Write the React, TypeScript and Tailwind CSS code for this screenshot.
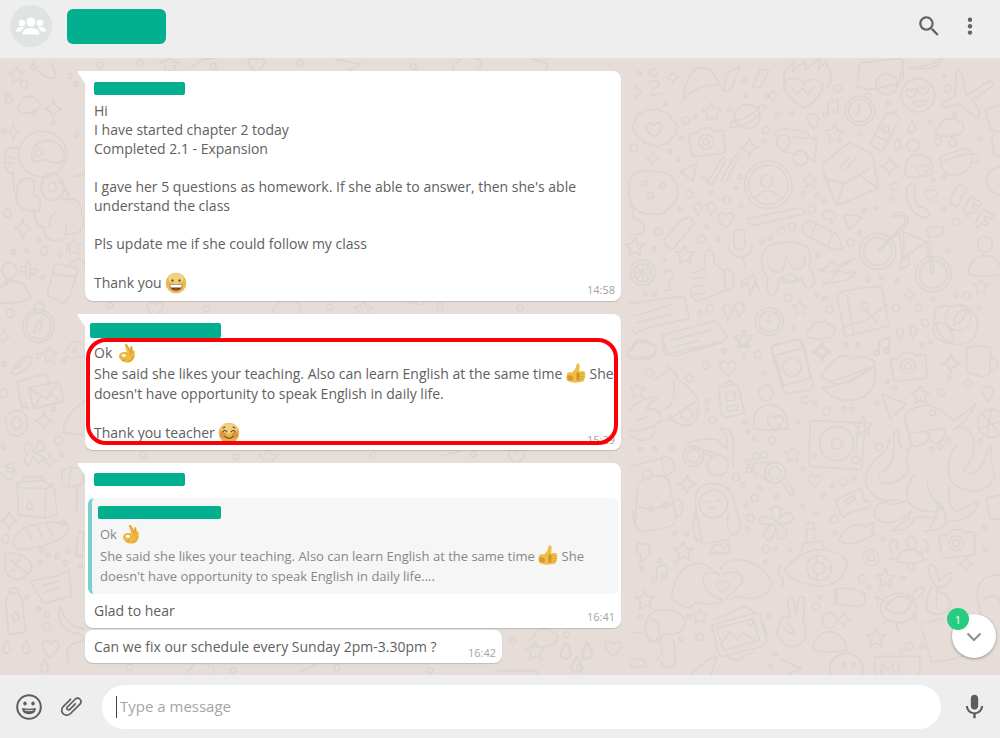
import { ReactNode } from "react";

type Point = [number, number];

/* ---------- Wallpaper ---------- */

const STAR =
  "M0-28l8 19 21 1-16 14 6 21L1 16l-18 11 4-21-17-14 21-2z";
const SPARKLE = "M0-28q4 23 28 28q-24 5-28 28q-4-23-28-28q24-5 28-28z";
const HEART = "M0 24C-14 14-27 4-24-9C-20-22-4-21 0-10C5-22 22-21 24-8C26 4 12 14 0 24z";
const CAMERA =
  "M-48-24l22-3 5-12 34-3 6 10 27-2q6 0 6 7l3 54q0 7-6 8l-86 9q-7 0-8-7l-9-53q-1-6 6-8zM20 0a22 22 0 1 1-44 0a22 22 0 1 1 44 0M8 0a10 10 0 1 1-20 0a10 10 0 1 1 20 0";
const PERSON =
  "M22-45a22 24 0 1 1-44 0a22 24 0 1 1 44 0M-50 45q2-50 50-57q46 4 52 57q-50 10-102 0z";
const NOTE = "M-14 18V-18L16-28V10M-14 18a7 7 0 1 1-14 0a7 7 0 1 1 14 0M16 10a7 7 0 1 1-14 0a7 7 0 1 1 14 0";
const CLOUD = "M-38 20q-10-22 12-26q4-26 28-20q14-8 22 8q22 0 18 20q-4 22-30 20q-20 8-50-2z";
const DROP = "M0-18q18 26 4 33q-14 4-15-9q2-10 11-24z";

function Shapes({ d, at, scale = 1 }: { d: string; at: Point[]; scale?: number }) {
  return (
    <>
      {at.map(([x, y]) => (
        <path key={`${x}-${y}`} d={d} transform={`translate(${x} ${y}) scale(${scale})`} />
      ))}
    </>
  );
}

function Rings({ at, r }: { at: Point[]; r: number }) {
  return (
    <>
      {at.map(([x, y]) => (
        <circle key={`${x}-${y}`} cx={x} cy={y} r={r} />
      ))}
    </>
  );
}

function UpperDoodles() {
  return (
    <g transform="translate(630 2) scale(.3333)">
      <Rings r={11} at={[[70,38],[168,182],[408,210],[12,264],[178,402],[290,420],[85,515],[215,537],[544,448],[454,512],[485,500],[662,547],[624,86],[794,378],[978,486],[598,748],[798,744],[866,743],[924,245],[952,86],[474,714],[885,789],[240,746],[1010,707]]} />
      <Rings r={6} at={[[27,40],[107,130],[197,170],[298,150],[343,62],[348,106],[402,243],[442,165],[484,162],[412,108],[155,236],[119,275],[145,297],[243,396],[332,437],[318,384],[328,351],[151,449],[231,500],[263,537],[72,566],[101,600],[397,545],[422,535],[520,401],[560,405],[584,426],[703,452],[737,444],[688,517],[565,585],[713,659],[802,663],[755,652],[210,760],[561,705],[584,716],[776,131],[690,221],[900,188],[975,162],[942,47],[1051,236],[910,359],[942,352],[785,415],[941,447],[955,572],[976,706],[908,717],[1047,743],[647,853],[685,854],[876,855],[902,846],[73,703],[46,701],[490,805],[282,872],[342,885]]} />
      <Shapes d={STAR} at={[[245,155],[614,220],[165,585],[15,560],[341,836]]} />
      <Shapes d={STAR} scale={0.8} at={[[540,361],[510,743],[1053,680]]} />
      <Shapes d={SPARKLE} at={[[358,262],[779,319],[575,873]]} />
      <Shapes d={SPARKLE} scale={0.7} at={[[128,52],[429,108],[68,295],[839,704]]} />
      <Shapes d={HEART} at={[[288,478],[72,207]]} />
      <Shapes d={HEART} scale={0.8} at={[[902,404],[877,330]]} />
      <Shapes d={CAMERA} at={[[230,245]]} />
      <Shapes d={PERSON} at={[[1065,598]]} />
      <Shapes d={NOTE} at={[[608,145],[762,862]]} />
      <Shapes d={CLOUD} at={[[572,812],[958,204],[35,868]]} />
      <Shapes d={DROP} at={[[846,202],[803,252],[968,245]]} />
      <path d="M140 205q4 24-16 28q-2 22-24 18q-18 18-34 0q-22 8-28-12q-24-4-20-24q-20-16-2-30q-4-24 20-24q10-20 30-8q18-12 30 4q26-2 26 20q22 10 18 28zM5 345q30-20 60-10q50-6 70 30q20 40-8 68q-20 34-62 30q-50-2-62-38q-14-40 2-80" />
      <circle cx="62" cy="406" r="9" /><circle cx="98" cy="378" r="8" /><circle cx="45" cy="370" r="8" />
      <path d="M160 120q8-88 52-98q40-2 54 54q-60-8-106 44zM190 28q50-20 84 52M280 92l10-50 40-24-30 76zM368 78l22-50 28 5-24 44q-20 14-26 1z" />
      <ellipse cx="352" cy="170" rx="38" ry="36" /><path d="M318 178q-22 15-18 25q60 0 109-63q-8-10-25 1M317 182q40-5 70-39" />
      <path d="M524 145C450 100 445 55 490 55Q518 52 522 74Q540 48 570 65C592 84 560 122 524 145zM465 75Q450 35 492 8L488 36 525 2V30L570-4 565 28 585 8Q620 45 590 88M487 80l12 25 18-22 16 23 20-28" />
      <path d="M695 8l112-12q14 2 12 15l-12 60-90 18-36-10 8-64zM820 2v60" /><circle cx="770" cy="72" r="32" /><circle cx="690" cy="152" r="44" /><circle cx="690" cy="152" r="34" /><path d="M685 130l5 25-14 12M700 110q8-16 22-8" />
      <circle cx="864" cy="106" r="50" /><path d="M842 112q-18-10-14-21 8-8 15 2 8-12 16 1-2 12-17 18zM878 104q-18-10-14-19 8-8 14 2 10-12 18 0-2 11-18 17zM848 124q18 2 40-4 2 16-16 18-20 2-24-14zM838 22q70 0 100-32-14 50-100 32z" />
      <path d="M975 108l4-76q10-14 18 18l12 58 66-44q15-4 15 12l-62 44 20 36q2 20-14 14l-44-38-46 10q-22 0 3-20z" />
      <path d="M552 208q-25-28-20-41 18-12 32 4 6 15-12 37zM432 230q2-30 60-20l40 6q12 14-6 20l-40-5M545 235q16-5 14 20l-6 50-28-22M448 270l60 15" /><circle cx="460" cy="246" r="21" /><circle cx="512" cy="294" r="22" />
      <path d="M722 248l44-84q28-16 42 14l-44 84q-10 14-22 6-16-8-20-20zM742 200l46 24M734 226l46 20M790 160l14-10" /><circle cx="767" cy="208" r="10" />
      <path d="M580 310l80-64 66 36 20 102-126 54-36-92q-10-24-4-36zM582 355l62 16 72-44M640 372l-18 62M690 345l54 40M628 325l30-34M645 330l32-38" />
      <circle cx="849" cy="257" r="18" /><path d="M825 338q-2-54 40-54 48 2 42 58-8 8-76 9zM932 290q46-20 86-26l8 26q-2 54-60 56-34-4-34-56zM940 304q45-20 82-24M1028 282q24 0 16 18-8 12-20 8" />
      <circle cx="415" cy="374" r="71" /><circle cx="415" cy="374" r="59" /><circle cx="410" cy="363" r="18" /><path d="M372 416q42-50 85 2M150 333l50-22-12 52zM215 352q10-12 22 10l40-70q10-2 10 8l-40 76zM275 358l42-74q12-2 6 12l-34 68q-8 10-14-6z" />
      <path d="M355 475l154-31q16 2 15 18l-152 34q-20 0-17-21zM102 538l50-56q30-20 40 8l-62 76q-26 2-28-28zM525 488q-16 18 2 38l84 44 28-5-18-42-72-38q-14-4-24 3zM560 485l-16 46M610 515l-18 45" />
      <path d="M832 380q-10 54 30 84 16 16 38 2 4-10-24-26-16 10-22-40 6-24-8-30zM640 466q40-4 56 8l-38 34zM580 460q15-15 30-4 15 20-8 34 6-14-10-12-20-5-12-18zM190 440q6-16 20-8 16 12-8 37 2-12-6-14zM230 436q12-14 22-4 14 14-10 35 2-12-6-14z" />
      <path d="M960 415l25-40q20-2 25 16-6 14-16 12 2 24-14 36-24-2-20-24zM1000 450l22-40 34 18-6 12-18-8-4 12 16 6-6 10-18-6-10 18zM1036 490l22-42 34 18-8 10-18-8-4 12 14 6-6 10-18-6-8 14z" />
      <circle cx="743" cy="574" r="54" /><circle cx="743" cy="574" r="42" /><circle cx="910" cy="643" r="53" /><circle cx="910" cy="643" r="41" />
      <path d="M745 570l78-80q12-32-36-20 0-20 30-10 30 16 10 36l-80 78M820 515l72 30-70 46zM808 520l10 86M890 545l14 94 8-2-14-94M895 520q-12-18 8-18h38q4 32-46 28zM812 600l22-10 4 24-28 14z" />
      <rect x="312" y="508" width="32" height="62" rx="16" /><path d="M296 560q8 32 35 32 34-2 36-40M338 592l8 34M333 668l37-24 18 48-14-26-14 46-6-46-20 16z" />
      <path d="M185 640l42-14q-10-50 8-58 20 8 16 40l32 26 2 58-80 32q-24-4-24-36M188 655l42-2M185 680l40-4M190 702l36-2M280 630q28-8 30 20 6 40-22 42" />
      <path d="M396 595q-2-34 40-44 50-14 92 8 24 26 8 58l16 34q6 28-18 34-14-6-20-30-36 30-66-2-2 40-20 56-24-2-14-56-18-20-18-58zM412 600q8 40 36 36 18-6 16-42M470 590q10 40 34 38 22-4 20-36M456 652q24-20 46 2-20 20-46-2z" />
      <path d="M564 630q25-2 30-18 14-12 25 6l54-22-56 35q-20 12-53-1zM578 668q28 0 34-24 16-20 36-4l34-6-30 26-70 14M620 700q70-20 134-20l24 118-134 32zM650 705l22 112M640 800l62-16 70-50M700 740l42 50" /><circle cx="704" cy="740" r="12" />
      <circle cx="38" cy="638" r="38" /><circle cx="38" cy="638" r="27" /><path d="M38 612v52M12 638h52M20 620l36 36M56 620l-36 36M100 640q16-18 31 0-2 18-14 22v26M105 692l25-5" />
      <path d="M0 730l152-20q12 0 14 12l12 54-120 26-44 18-14-20M14 768l110-34M22 788l106-26M95 826l154-42q18 0 22 18l20 26-16 20-144 40q-12 0-20-10zM122 842l120-32M130 862l76-20" />
      <circle cx="418" cy="785" r="42" /><circle cx="418" cy="785" r="31" /><path d="M418 765l4 25-14-10M918 745q30-12 48-4 50-24 76 40 4 66-50 72-80 0-82-44zM915 790q40-14 58 52-30 18-58-52zM422 862l80-25q14 0 16 12l14 50M432 900l-8-38M280 740q12-12 22 0 12 18-10 40 2-12-8-18zM314 732q20-14 28 8 2 14-18 32 4-18-10-24zM798 808q14-10 22 6-2 22-14 24zM838 800q14-8 22 6-2 18-14 28z" />
      <circle cx="984" cy="774" r="38" /><path d="M972 775q12-28 40-24-8 30-40 46zM1110 135l-44 12 16 62 28 8M1100 210l-14 20 6 56 18 4M1110 320q-40 10-40 40t40 46M10 75l26 18-22 20M50 70q40-18 38 5-30 20-28 34l34-10M0 430q10 30 12 45 40 10 28 45l-40 4" />
    </g>
  );
}

function LowerDoodles() {
  return (
    <g transform="translate(630 282) scale(.3333)">
      <Rings r={11} at={[[58,98],[178,114],[227,76],[385,43],[248,239],[525,180],[590,214],[427,301],[318,411],[374,474],[361,534],[408,627],[697,716],[747,320],[933,158],[1014,130],[843,681],[838,919],[639,425],[612,538],[558,800],[208,891]]} />
      <Rings r={6} at={[[345,246],[355,275],[375,298],[231,183],[232,212],[348,15],[282,32],[402,98],[503,246],[553,188],[641,206],[667,208],[519,386],[606,436],[673,415],[773,124],[795,144],[740,188],[957,113],[1064,562],[1064,627],[405,667],[437,626],[480,628],[614,578],[571,772],[717,740],[760,598],[338,434],[389,446],[440,470],[517,498],[558,520],[135,580],[138,666],[170,581],[127,324],[74,327],[31,328],[36,687],[176,830],[31,830],[153,897],[416,830],[435,941],[423,979],[876,919],[812,933],[820,715],[88,662],[352,567],[350,497],[580,465],[647,13],[1052,302],[684,14]]} />
      <Shapes d={STAR} at={[[160,634],[45,779],[738,893],[766,714],[871,164],[700,258]]} />
      <Shapes d={STAR} scale={0.8} at={[[488,343],[22,152],[209,829],[341,4]]} />
      <Shapes d={SPARKLE} at={[[171,433],[576,37],[963,70]]} />
      <Shapes d={SPARKLE} scale={0.8} at={[[640,838],[1008,672]]} />
      <Shapes d={HEART} at={[[294,83],[435,246]]} />
      <Shapes d={HEART} scale={0.8} at={[[556,420],[279,738]]} />
      <Shapes d={CAMERA} at={[[836,79],[981,610]]} />
      <Shapes d={PERSON} at={[[598,886]]} />
      <Shapes d={NOTE} at={[[94,700],[760,20]]} />
      <Shapes d={CLOUD} at={[[35,34]]} />
      <path d="M425 35q-2-20 15-23l54-12q18-2 22 14l34 116q2 16-14 20l-58 10q-16 0-20-16zM434 46l88-22 20 92-82 20z" /><circle cx="486" cy="82" r="28" />
      <path d="M574 108q40-62 70-61 12 4 18 12 26-18 72 4 8 16-36 40-50 40-100 24zM574 140q50 10 160-60 14 60-36 92-70 30-124-32zM600 122q40-4 120-40" />
      <path d="M0 208q40-40 84-36-24 16-36 34 42 0 46 24-6 36-94 44M76 118l38-28q-4-18 10 0 24 14 18 30 36 12 60 60l-80 56-34 10M130 122q12 60-22 86M20 240l34-10M205 190q2 70-44 66-40-8-40-30M0 285q20 20 50 15 25-10 24-40" /><circle cx="170" cy="222" r="18" />
      <path d="M265 145l46-12q14 4 16 14l16 72-55 14q-12-4-14-16zM270 138l30-16 12 10" /><rect x="288" y="155" width="28" height="28" rx="10" /><path d="M290 200l34-6 2 14-34 6z" />
      <ellipse cx="408" cy="159" rx="21" ry="24" /><path d="M372 267q-8-70 48-73 54 4 54 72-42 8-102 1z" />
      <path d="M540 250q0-9 10-8l144 6q12 0 10 14l-8 118q0 10-10 9l-142-10q-8-2-7-12zM678 340l4-60" /><circle cx="620" cy="311" r="51" /><circle cx="620" cy="311" r="17" /><circle cx="552" cy="348" r="7" /><circle cx="677" cy="360" r="12" />
      <path d="M755 162l76 30-50 44zM1010 25q46-14 72 0l-2 78-20 8-50-14zM1082 55q20-8 20 22-4 20-22 14M1075 185q-24-24-18-41 16-12 32 2 8 14-14 39z" />
      <path d="M838 280q-30-50 4-70 50-30 95 4 24 18 34 30l68-54-30 50-38 30q50-30 62 50-4 40-32 70 30 30 64-30 24-80 16 0 14 40 14 50-30 60-96 36-44-14-44-56 0-40 24-76M834 340l8-20-8-56q-4-20-12-30M790 278q18-16 16 10 0 44 30 40-10 50 0 62-30 50-84 36-20-20 16-38 30-24 22-110M780 292q-4 40-40 62-44 48-30 84 20 40 56 44l30-2 34 4-40 10q-60-24-56 38 34 30 88 0 24-20 20-20 0 30-32 40-20 20-26 20 60 0 70-40l64 0M855 402q-36 40-18 86 40 40 100 20-50-50-44-84M948 545q-4-50-22-60-16 90-44 90 60-6 66-30M958 440q-8 60 20 76l66-34q-4 60-96 64" />
      <path d="M840 280l104-16q2 40-24 46-18-2-22-20-14 30-44 30-14-10-14-40zM886 282l12-4" /><circle cx="908" cy="218" r="8" /><circle cx="905" cy="330" r="7" /><circle cx="955" cy="300" r="7" /><circle cx="930" cy="320" r="7" /><circle cx="1085" cy="250" r="42" /><path d="M1055 220l55 60M1050 265l60-20M1085 208l-15 80" />
      <circle cx="190" cy="348" r="31" /><circle cx="190" cy="348" r="20" /><circle cx="264" cy="376" r="31" /><path d="M165 312q60-20 96-14l30 30v-30q-4-26-24-30 8-8 26 0l16 20v90M220 340l30 10M180 320l90 24" />
      <circle cx="435" cy="398" r="31" /><circle cx="435" cy="398" r="18" /><path d="M455 425l26 42 12-6-22-42M376 368h40M376 395q30 30 50 30M376 368q-14 14 0 40" /><circle cx="376" cy="348" r="10" /><circle cx="402" cy="345" r="10" /><circle cx="355" cy="366" r="8" /><circle cx="357" cy="390" r="8" />
      <path d="M0 380l110-30q20 6 24 28 0 20-20 26l-20 6M92 355l12 44M22 440q10-30 50-32 36-6 46 20l20 100q0 26-24 34l-76 14q-20-8-22-30zM25 500l40 8 70-20M10 510q-4 50 16 54M140 478q20 2 18 20-2 30-22 32" /><circle cx="62" cy="506" r="8" /><circle cx="106" cy="495" r="8" /><circle cx="52" cy="404" r="14" />
      <circle cx="250" cy="492" r="42" /><path d="M196 490q-2-58 52-60 50 0 64 50 16 50 18 80-2 26-26 25-4 12-16 15l-70 12q-20-90-22-122zM196 510q-18 90 20 98M294 520q-10 70 28 62M228 488q8-8 14 0M256 484q8-8 14 0M240 500q10 14 18-2M240 640l10-24 24-4 4 18 18-22 6 32z" />
      <path d="M438 545q-30-44 0-46 28 0 4 46 36-46 46-16 10 24-46 22 40 20 24 38-22 26-28-32-10 60-34 36-12-24 30-42-46 10-46-12 8-24 50 6z" />
      <path d="M615 480l78-35 12 40q20-6 16 10-4 16-18 10l-46 14-16 14-10-14zM645 482l28-16 2 14-28 14zM626 600q30-60 80-40l26-14-6 34 12 2-26 10q-50 34-86 8z" /><path d="M462 690q60-70 120-60 74 10 68 50-20 60-90 58-80-10-98-48zM515 635l4-24 55-8 10 26M530 606l-2-56 24-2 2 50M530 570l24-4M455 675q-18 20-6 34 20 0 6 34" /><circle cx="567" cy="684" r="37" /><circle cx="567" cy="684" r="18" />
      <path d="M560 650v20M560 700v20M532 684h20M582 684h20" /><circle cx="723" cy="653" r="24" /><circle cx="723" cy="653" r="11" />
      <ellipse cx="844" cy="609" rx="15" ry="19" /><path d="M800 664q6-36 42-35 34 2 40 34-40 12-82 1M790 640q-22-20-2-40 18 0 14 28M880 600q24 8 10 32l-14 6M780 655l20 2M898 658l-20 2" />
      <path d="M125 760q20-78 64-88 30-8 50 12l30 20q-50-18-50 20 8 40 60 56-20 20-80 6l-20 18q-52-10-54-44zM270 690q20-40 70-28 64 10 86 70-16 40-60 45l-50-8q-20 20-28 4 40-30 50-50-2-40-60-20" />
      <path d="M245 855l132-36q14 2 16 14l16 70q0 12-12 16l-116 30q-14 0-16-12zM260 865l110-30 18 66-106 30zM270 915l30-40 20 20 20-16 40 24M250 840l96-42 28 18M400 850l14 40M290 950l30 12 50-26" /><circle cx="360" cy="848" r="9" />
      <path d="M450 860q-4-40 30-26l-8-56q8-14 18 2l8 44 8-50q16-10 18 8l-4 70q20 40-16 66-40 8-52-20-22-16-2-38zM470 850q24 10 20 30-20 0-30-20M615 748q60-10 90 14l-2 30-12 8-76-8zM620 755v30M690 765l14-6" />
      <ellipse cx="806" cy="804" rx="54" ry="44" /><path d="M765 805q40-60 80-20-20 60-80 20zM846 774q10-40 36-30 10 10-36 40M760 780l-22-10 8 26M780 840l-20 10M800 848q-2 20 10 28M858 830q8 24-14 6M780 790l-20-10M830 775l10-12M845 820l14 10" />
      <path d="M895 675q30-4 30 50 40-40 42-20-2 28-42 40-30-20-30-70zM905 740q-20 40-14 70 40 30 72-10-4-40-40-46M920 740v60M1040 760q10-60 70-54M1040 760l16 90M1058 780q50-30 52 10M880 850l60-14M874 860l30 105q10 6 100-18" />
      <path d="M46 860q4-50 50-50 60-4 70 40-10 40-50 30-14 0-22 10-10 30-30 10-20-10-18-40zM60 838q30 0 28 40-10 40-30 24M0 876q20 6 40 0M88 900l10 40-18 20M130 900l8 60-10 20-30 2-4-20M5 980q-14-30 10-20 30-12 34 20zM180 1004l60-50 22-2-20 52M455 960l60 26-44 18" /><circle cx="649" cy="990" r="50" /><path d="M735 1004v-55h134v55M755 1004v-34l18 20 18-20v34M806 970v34M640 980q-14-10 4-12 10 0-4 12zM668 980q-10-12 4-12 10 0-4 12z" />
      <path d="M22 610l40 4-8 20 10 2-36 36 6-28-16-4zM95 5l8 40 170-40M1070 475l40-10M1070 475l10 60 30 4" />
    </g>
  );
}

function LeftDoodles() {
  return (
    <g transform="translate(0 2) scale(.3333 .3922)">
      <Rings r={11} at={[[25,98],[72,62],[22,390],[133,486],[30,646],[10,850],[176,970],[195,345],[16,1220],[140,1444],[32,1040]]} />
      <Rings r={6} at={[[102,133],[98,18],[160,160],[10,182],[40,490],[80,486],[180,495],[205,480],[115,460],[128,555],[20,565],[115,755],[190,768],[12,775],[72,880],[160,890],[185,1005],[10,985],[125,1250],[205,1250],[120,1282],[145,1262],[170,1265],[195,1282],[115,1400],[140,1415],[190,1180],[225,740],[80,1370],[240,1290],[20,90],[210,40],[228,62],[230,190]]} />
      <Shapes d={STAR} at={[[50,38],[222,476],[148,752]]} scale={0.8} />
      <Shapes d={SPARKLE} at={[[160,125],[69,430],[131,920],[28,1175]]} scale={0.9} />
      <Shapes d={SPARKLE} at={[[40,184],[10,705],[150,1022]]} scale={0.7} />
      <Shapes d={HEART} at={[[152,1500]]} />
      <Shapes d={CLOUD} at={[[86,115],[228,740]]} scale={0.8} />
      <Shapes d={DROP} at={[[20,1497],[78,1497],[134,1545]]} />
      <ellipse cx="128" cy="240" rx="72" ry="58" /><path d="M95 240q8-34 50-34 44 0 50 48-20 16-60 0-40 14-40-14zM105 238q10-20 24-10-4 20-20 18zM55 225q-44-10-42 35 4 30 30 32M20 245l24 6M16 262l24 2M40 285q0 80 28 94 50 14 50 0 12-30-16-34V310q-8-14-30-6-28 4-20 64M100 380l8 30q10 18 24 16 0 32 30 34 34 0 36-18 50 8 52-30l-10-44q-14-20-34-10-8-40-30-50M150 426q-8-26 16-36M200 440l-4-24M215 300l40-10" />
      <circle cx="157" cy="324" r="34" /><circle cx="157" cy="324" r="12" />
      <ellipse cx="28" cy="537" rx="22" ry="20" /><path d="M0 580q30-30 70-8l25 32q-20 18-95 15M88 513q4 20 2 22 24-4 22 4-2 12-24 4 8 14-2 14-12 0-6-18-24 4-20-8 6-8 20 0-8-16 8-18zM166 518l68 14-20 60q-16 28-28 28l-40-18q-8-12 4-30zM160 545l70 8M200 530q40-40 56-6" />
      <ellipse cx="116" cy="678" rx="47" ry="42" /><ellipse cx="116" cy="678" rx="37" ry="33" /><circle cx="117" cy="632" r="15" /><path d="M128 662l-8 24-20 10 10-24zM32 796l36-38q20-8 30 4 2 12-34 34-22 10-32 0zM45 790l34-30M50 820l80-18q18 4 16 30M50 820l14 64 24 4M86 836l90-16q12 26 14 50l-90 20zM86 836l54 28 36-44M100 890l26-36M188 874l-40-26" />
      <circle cx="50" cy="926" r="33" strokeDasharray="14 6" /><circle cx="50" cy="926" r="15" />
      <path d="M255 870q-60 30-66 80l60 6M70 990q10-20 25-10l6 24 14-30q20-2 18 18l-26 10 26 12-18 14-16-18-10 24-18-8 10-20zM10 1035l36 10-8 20-14 6-20-18M50 1078l78-6 34 18 10 70-36 8-80-8zM50 1078l12 12 76 4 24-14M138 1094l-4 74M88 1125q20 24 0 20-16 0 0-20zM70 1078v-14l60-2v12" />
      <path d="M38 1230q12-36 60-44 60-14 105-2 10 26-40 44-60 20-100 20-22-4-25-18zM80 1192l16 30M110 1186l16 30M140 1182l16 30M14 1258q60-4 80 26 4 20-14 30-40 28-66-16 8-20 0-40zM30 1275l50 32M45 1284l16-12M50 1300l-16 2M90 1330l76-14 40-14 8 64-82 20-18-24zM130 1340l46-12M132 1358l44-12M16 1380l10-20h30l12 22 8 76-50 6zM30 1360v-14h24v14M46 1405q22 20 4 26-22-2-4-26zM180 1390q-12 60 40 70 30 0 32 20M180 1390q20 60 75 60M205 1540q-10-40 10-50l40-10" />
      <path d="M185 1060q0-20 30-22 34 4 34 10v30q-30 16-62 6zM215 1038l-10 46M230 1090v60M236 1200l15 6-4 60-20-4zM100 5q16 40 64 42 4-20-14-44" />
    </g>
  );
}

function GapDoodles() {
  return (
    <g transform="scale(.3333)">
      <Rings r={9} at={[[300,22],[420,15],[640,25],[900,16],[1240,26],[330,742],[620,752],[990,748],[1320,745],[1560,750],[430,1190],[710,1196],[1120,1192],[1420,1188],[390,1828],[700,1838],[1010,1830],[1290,1838],[1538,1748],[1700,1730],[1740,1830]]} />
      <Shapes d={STAR} at={[[1606,1778],[510,20],[1090,755],[805,1198]]} />
      <Shapes d={HEART} at={[[1840,1770],[770,18],[465,752],[1550,1194]]} />
      <Shapes d={DROP} scale={1.4} at={[[1698,1780],[1762,1780],[1730,1820]]} />
      <Shapes d={CLOUD} at={[[1630,1740],[1400,20],[860,750],[600,1840]]} />
      <path d="M560 34l48-30 40-4M1010 4l70 14-50 30M1490 1838h120l10 20M1600 4l44 14-10 24M1220 732l46 10 12-20M1320 1194l60-14M900 1840l50-20" />
    </g>
  );
}

function Wallpaper() {
  return (
    <svg
      aria-hidden="true"
      className="absolute inset-0 h-full w-full"
      fill="none"
      stroke="#ddd5cf"
      strokeWidth="5"
      strokeLinecap="round"
      strokeLinejoin="round"
    >
      <UpperDoodles />
      <LowerDoodles />
      <LeftDoodles />
      <GapDoodles />
    </svg>
  );
}

/* ---------- Emoji ---------- */

function Grin() {
  return (
    <svg role="img" aria-label="grinning face" viewBox="0 0 22 22" className="inline-block size-[22px] align-[-6px]">
      <circle cx="11" cy="11" r="10.3" fill="#e9b94a" />
      <ellipse cx="11" cy="6.5" rx="8" ry="5.2" fill="#f0d083" />
      <ellipse cx="7.5" cy="8.6" rx="1.2" ry="1.4" fill="#7b5a2c" />
      <ellipse cx="14.5" cy="8.6" rx="1.2" ry="1.4" fill="#7b5a2c" />
      <path d="M4.6 12.5h12.8q-.6 6.2-6.4 6.2t-6.4-6.2z" fill="#6a4532" />
      <path d="M5 12.8h12l-.8 2.8H5.8z" fill="#fff" />
      <path d="M8 17.5q3-1.5 6 0-3 1.8-6 0z" fill="#d2453b" />
    </svg>
  );
}

function Blush() {
  return (
    <svg role="img" aria-label="smiling face" viewBox="0 0 22 22" className="inline-block size-[22px] align-[-6px]">
      <circle cx="11" cy="11" r="10.3" fill="#e8b646" />
      <ellipse cx="11" cy="6.5" rx="8" ry="5.2" fill="#f0d083" />
      <circle cx="5" cy="13" r="3" fill="#dc9448" />
      <circle cx="17" cy="13" r="3" fill="#dc9448" />
      <path d="M4.8 9.8q2-2.8 4 0M13.2 9.8q2-2.8 4 0M7 14.5q4 3.8 8 0M5 6l2-1M15 5l2 1" fill="none" stroke="#735022" strokeWidth="1.2" strokeLinecap="round" />
    </svg>
  );
}

function OkHand() {
  return (
    <svg role="img" aria-label="OK hand" viewBox="0 0 18 20" className="ml-[2px] inline-block h-[20px] w-[18px] align-[-5px]">
      <path
        d="M6.600 1.200Q7.600.1 8.900 1.300L12 6.200 12.600 3.200Q13.600 2.200 14.300 3.600L15 8.500q.9-2.600 1.600-.6 1 5-1 8.600-2 3.200-6.200 3-4.400 0-6-2.600Q.6 16 1 12.600 1.600 9.600 5 8.900L9 9.100z"
        fill="#efbb42"
      />
      <path d="M8.200 1.300L12 8l.6 4.500M12.800 4l1.700 6M9.500 18.500q5-1 5.600-6M3.600 17q2.400 1.400 4.400-.6" fill="none" stroke="#d2932b" strokeWidth=".9" />
      <ellipse cx="5.800" cy="12.400" rx="2.700" ry="2.200" fill="#fdf6e4" stroke="#dca132" strokeWidth=".8" />
    </svg>
  );
}

function ThumbsUp() {
  return (
    <svg role="img" aria-label="thumbs up" viewBox="0 0 20 20" className="inline-block size-[20px] align-[-4px]">
      <path
        d="M1.400 9.800Q3 8.800 6.200 9.300 9.800 6.600 10.200 3.200 10.300.2 11.800.3 14 .8 13.600 4.600L13 8.200l4.600-.1q2 .5 1.300 2.400.9 1.500 0 2.800.6 1.600-.5 2.800.2 2.300-2.200 2.700l-7 .9q-4.200 0-7.400-1.700Q.3 17 .4 14z"
        fill="#f0bd45"
      />
      <path d="M1 12.500q3-1 5.600 1l.6 3.500q-3 1-5.400-.2z" fill="#d9982f" />
      <path d="M10.600 9.600q2.800-.6 3 1.400l-.4 6.800q-2.600.4-2.700-1.200z" fill="#d3922b" />
      <path d="M13.500 10.700h5M13.500 13.400h5M13.300 16h4.600" fill="none" stroke="#dca136" strokeWidth=".8" />
    </svg>
  );
}

/* ---------- Messages ---------- */

function Line({ children, tall = false }: { children?: ReactNode; tall?: boolean }) {
  return <p className={tall ? "h-[21px] whitespace-nowrap leading-[21px]" : "h-[19px] whitespace-nowrap leading-[19px]"}>{children}</p>;
}

function Time({ children }: { children: string }) {
  return <time className="-mb-[4px] text-[11px] leading-[14px] text-[#a3a3a3]">{children}</time>;
}

function Bubble({ children, tail = false, className = "" }: { children: ReactNode; tail?: boolean; className?: string }) {
  return (
    <article
      className={`relative rounded-lg bg-white pr-[6px] pl-[9px] text-[14px] text-[#606060] shadow-[0_1px_1px_rgba(0,0,0,0.16)] ${tail ? "rounded-tl-none" : ""} ${className}`}
    >
      {tail && (
        <svg aria-hidden="true" viewBox="0 0 8 12" className="absolute top-0 -left-[8px] h-[12px] w-[8px]">
          <path d="M1.500 0H8v12L.5 1.500Q-.2.300 1.500 0z" fill="#fff" />
        </svg>
      )}
      {children}
    </article>
  );
}

export default function App() {
  return (
    <div className="flex min-h-screen flex-col bg-[#eeeeee] font-['Open_Sans','Noto_Sans',sans-serif]">
      <header className="flex h-[58px] items-center pr-[18px] pb-[6px] pl-[10px]">
        <svg role="img" aria-label="Group" viewBox="0 0 42 42" className="size-[42px]">
          <circle cx="21" cy="21" r="21" fill="#dfe3e2" />
          <g fill="#fff">
            <circle cx="21" cy="17" r="4.500" />
            <circle cx="12" cy="18" r="3.200" />
            <circle cx="30" cy="18" r="3.200" />
            <path d="M12.500 29.500q0-6.500 8.500-6.500t8.500 6.500zM6 26.500q0-4.500 6-4.500 1.500 0 2.500.4-3 1.400-3.400 4.100zM36 26.500q0-4.500-6-4.500-1.500 0-2.500.4 3 1.400 3.400 4.100z" />
          </g>
        </svg>
        <h1 aria-label="Group name hidden" className="ml-[15px] h-[35px] w-[99px] rounded-md bg-[#02af8f]" />
        <div className="ml-auto flex items-center gap-[16px] text-[#626465]">
          <button aria-label="Search" className="flex size-[26px] items-center justify-center">
            <svg viewBox="0 0 24 24" className="size-[26px]" fill="currentColor">
              <path d="M15.900 14.300H15l-.3-.3c1-1.100 1.600-2.700 1.600-4.300 0-3.700-3-6.700-6.700-6.700S3 6 3 9.700s3 6.700 6.700 6.700c1.600 0 3.200-.6 4.300-1.600l.3.300v.8l5.100 5.100 1.500-1.500-5-5.200zm-6.200 0c-2.600 0-4.600-2.100-4.600-4.600s2.100-4.600 4.600-4.600 4.600 2.100 4.600 4.600-2 4.600-4.600 4.600z" />
            </svg>
          </button>
          <button aria-label="Menu" className="flex size-[24px] items-center justify-center">
            <svg viewBox="0 0 24 24" className="size-[24px]" fill="currentColor">
              <circle cx="12" cy="5.800" r="2.200" />
              <circle cx="12" cy="12.200" r="2.200" />
              <circle cx="12" cy="18.600" r="2.200" />
            </svg>
          </button>
        </div>
      </header>

      <main className="relative flex-1 bg-[#e6ddd8] pt-[13px] pr-4 pb-[12px] pl-[85px]">
        <Wallpaper />
        <div className="flex max-w-[536px] flex-col">
          <Bubble tail className="pt-[11px] pb-[8px]">
            <div className="mb-[6px] h-[13px] w-[91px] rounded-[2px] bg-[#02af8f]" />
            <Line>Hi</Line>
            <Line>I have started chapter 2 today</Line>
            <Line>Completed 2.1 - Expansion</Line>
            <Line />
            <Line>I gave her 5 questions as homework. If she able to answer, then she's able</Line>
            <Line>understand the class</Line>
            <Line />
            <Line>Pls update me if she could follow my class</Line>
            <Line />
            <div className="flex items-end justify-between">
              <Line tall>Thank you <Grin /></Line>
              <Time>14:58</Time>
            </div>
          </Bubble>

          <Bubble tail className="mt-[13px] pt-[9px] pb-[7px]">
            <div className="-ml-[4px] mb-[4px] h-[15px] w-[131px] rounded-[2px] bg-[#02af8f]" />
            <Line tall>Ok <OkHand /></Line>
            <Line tall>She said she likes your teaching. Also can learn English at the same time <ThumbsUp /> She</Line>
            <Line>doesn't have opportunity to speak English in daily life.</Line>
            <Line />
            <div className="flex items-end justify-between">
              <Line tall>Thank you teacher <Blush /></Line>
              <Time>15:29</Time>
            </div>
            <div className="absolute top-[24px] right-[3px] bottom-[5px] left-px rounded-[20px] border-4 border-[#fb0007]" />
          </Bubble>

          <Bubble tail className="mt-[13px] pt-[10px] pb-[8px]">
            <div className="mb-[12px] h-[13px] w-[91px] rounded-[2px] bg-[#02af8f]" />
            <blockquote className="-mr-[3px] -ml-[6px] mb-[7px] rounded-md border-l-4 border-[#79d0cc] bg-[#f6f6f6] pt-[8px] pb-[7px] pl-[8px] text-[13px] text-[#878787]">
              <div className="-ml-[2px] mb-[5px] h-[13px] w-[123px] rounded-[2px] bg-[#02af8f]" />
              <Line tall>Ok <OkHand /></Line>
              <Line tall>She said she likes your teaching. Also can learn English at the same time <ThumbsUp /> She</Line>
              <Line tall>doesn't have opportunity to speak English in daily life....</Line>
            </blockquote>
            <div className="flex items-end justify-between">
              <Line>Glad to hear</Line>
              <Time>16:41</Time>
            </div>
          </Bubble>

          <Bubble className="mt-[2px] flex w-[417px] items-end justify-between py-[7px]">
            <Line>Can we fix our schedule every Sunday 2pm-3.30pm ?</Line>
            <Time>16:42</Time>
          </Bubble>
        </div>

        <button
          aria-label="Scroll to latest, 1 unread message"
          className="absolute right-[4px] bottom-[17px] flex size-[44px] items-center justify-center rounded-full bg-white text-[#8d8f90] shadow-[0_1px_3px_rgba(0,0,0,0.35)]"
        >
          <svg viewBox="0 0 16 16" className="mt-[2px] size-[16px]" fill="none" stroke="currentColor" strokeWidth="2">
            <path d="M1.500 4.500L8 11l6.500-6.500" />
          </svg>
          <span className="absolute -top-[6px] -left-[5px] flex size-[22px] items-center justify-center rounded-full bg-[#27cc83] text-[11px] leading-none text-white">
            1
          </span>
        </button>
      </main>

      <footer className="flex h-[63px] items-center pr-[13px] pl-[15px] text-[#5b5d5e]">
        <button aria-label="Emoji">
          <svg viewBox="0 0 28 28" className="size-[28px]" fill="currentColor">
            <circle cx="14" cy="14" r="11.800" fill="none" stroke="currentColor" strokeWidth="2" />
            <ellipse cx="10" cy="10.500" rx="1.700" ry="2" />
            <ellipse cx="18" cy="10.500" rx="1.700" ry="2" />
            <path d="M7 15q7 1.600 14 0-.4 6.200-7 6.200T7 15zm2 1.800q.8 1.400 5 1.400t5-1.400q-5 .8-10 0z" fillRule="evenodd" />
          </svg>
        </button>
        <button aria-label="Attach" className="ml-[16px]">
          <svg viewBox="0 0 24 24" className="size-[25px]" fill="currentColor">
            <path d="M1.816 15.556v.002c0 1.502.584 2.912 1.646 3.972s2.472 1.647 3.974 1.647a5.580 5.580 0 0 0 3.972-1.645l9.547-9.548c.769-.768 1.147-1.767 1.058-2.817-.079-.968-.548-1.927-1.319-2.698-1.594-1.592-4.068-1.711-5.517-.262l-7.916 7.915c-.881.881-.792 2.250.214 3.261.959.958 2.423 1.053 3.263.215l5.511-5.512c.28-.28.267-.722.053-.936l-.244-.244c-.191-.191-.567-.349-.957.040l-5.506 5.506c-.18.180-.635.127-.976-.214-.098-.097-.576-.613-.213-.973l7.915-7.917c.818-.817 2.267-.699 3.230.262.5.501.802 1.100.849 1.685.051.573-.156 1.111-.589 1.543l-9.547 9.549a3.970 3.970 0 0 1-2.829 1.171 3.975 3.975 0 0 1-2.830-1.173 3.973 3.973 0 0 1-1.172-2.828c0-1.071.415-2.076 1.172-2.830l7.209-7.211c.157-.157.264-.579.028-.814L11.500 4.360a.572.572 0 0 0-.834.018l-7.205 7.207a5.577 5.577 0 0 0-1.645 3.971z" />
          </svg>
        </button>
        <div className="ml-[18px] flex h-[44px] flex-1 items-center rounded-full bg-white pr-5 pl-[14px]">
          <span aria-hidden="true" className="mr-[3px] h-[22px] w-px bg-[#444444]" />
          <input
            type="text"
            aria-label="Type a message"
            placeholder="Type a message"
            className="h-full min-w-0 flex-1 bg-transparent pb-[2px] text-[15px] text-[#606060] outline-none placeholder:text-[#a5a5a5]"
          />
        </div>
        <button aria-label="Voice message" className="ml-[21px]">
          <svg viewBox="0 0 24 24" className="size-[25px]" fill="currentColor">
            <path d="M11.999 14.942c2.001 0 3.531-1.530 3.531-3.531V4.350c0-2.001-1.530-3.531-3.531-3.531S8.469 2.350 8.469 4.350v7.061c0 2.001 1.530 3.531 3.530 3.531zm6.238-3.530c0 3.531-2.942 6.002-6.237 6.002s-6.237-2.471-6.237-6.002H3.761c0 4.001 3.178 7.297 7.061 7.885v3.884h2.354v-3.884c3.884-.588 7.061-3.884 7.061-7.885h-2z" />
          </svg>
        </button>
      </footer>
    </div>
  );
}
